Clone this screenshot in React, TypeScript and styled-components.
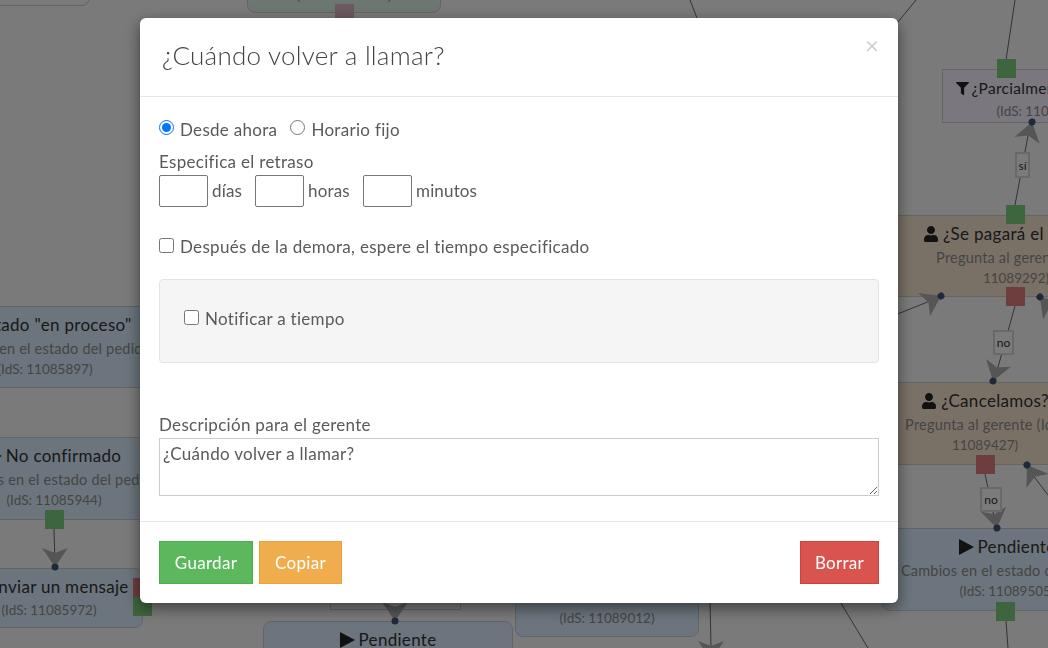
import React from "react";
import styled, { createGlobalStyle } from "styled-components";
import { FaUser, FaFilter } from "react-icons/fa";

const GlobalStyle = createGlobalStyle`
  html, body {
    margin: 0;
    height: 100%;
    overflow: hidden;
    font-family: Lato, "Open Sans", sans-serif;
    color: #5a5a5a;
  }
`;

const Canvas = styled.div`
  position: relative;
  width: 1048px;
  height: 648px;
  overflow: hidden;
  background-color: #f5f5f5;
`;

const Wires = styled.svg`
  position: absolute;
  inset: 0;
  z-index: 2;
`;

const nodeColors = {
  blue: "#d8ebfb",
  tan: "#f5e2cc",
  lilac: "#f4eefc",
  mint: "#d8efe4",
  plain: "#f5f5f5",
};

const Node = styled.div<{ $kind: keyof typeof nodeColors; $round?: boolean }>`
  position: absolute;
  box-sizing: border-box;
  display: flex;
  flex-direction: column;
  align-items: center;
  padding-top: 4px;
  border: 1px solid #c9c9c9;
  border-radius: ${(p) => (p.$round ? "8px" : "0")};
  background-color: ${(p) => nodeColors[p.$kind]};
  white-space: nowrap;
`;

const NodeTitle = styled.div<{ $small?: boolean }>`
  display: flex;
  align-items: center;
  gap: ${(p) => (p.$small ? "3px" : "4px")};
  height: 27px;
  font-size: ${(p) => (p.$small ? "15.5px" : "17px")};
  letter-spacing: 0.3px;
  color: #333;
`;

const NodeText = styled.div`
  height: 21px;
  line-height: 21px;
  font-size: 14.5px;
  letter-spacing: 0.2px;
  color: #8a8a8a;
`;

const NodeId = styled(NodeText)`
  font-size: 13.5px;
  letter-spacing: 0;
`;

const Port = styled.div<{ $color: "green" | "red" | "pink" }>`
  position: absolute;
  z-index: 3;
  width: 19px;
  height: 19px;
  background-color: ${(p) =>
    p.$color === "green" ? "#7ccc7c" : p.$color === "red" ? "#dc7c7c" : "#d9b0c0"};
`;

const EdgeLabel = styled.div`
  position: absolute;
  z-index: 4;
  box-sizing: border-box;
  display: flex;
  align-items: center;
  justify-content: center;
  border: 2px solid #d2d2d2;
  background-color: #f7f7f7;
  font-size: 12px;
  color: #333;
`;

const Overlay = styled.div`
  position: fixed;
  inset: 0;
  z-index: 10;
  display: flex;
  justify-content: center;
  align-items: flex-start;
  padding: 18px 10px 0 0;
  background-color: rgba(0, 0, 0, 0.5);
`;

const Modal = styled.div`
  position: relative;
  box-sizing: border-box;
  width: 758px;
  height: 585px;
  display: flex;
  flex-direction: column;
  background-color: #fff;
  border-radius: 6px;
  box-shadow: 0 5px 15px rgba(0, 0, 0, 0.5);
`;

const ModalHeader = styled.div`
  box-sizing: border-box;
  height: 79px;
  padding: 20px 22px 0;
  border-bottom: 1px solid #e5e5e5;
`;

const ModalTitle = styled.h4`
  margin: 0;
  font-size: 26px;
  line-height: 34px;
  font-weight: 300;
  letter-spacing: 0.25px;
  color: #444;
`;

const CloseButton = styled.button`
  position: absolute;
  top: 13px;
  right: 19px;
  padding: 0;
  border: 0;
  background: none;
  font-family: inherit;
  font-size: 24px;
  line-height: 28px;
  color: #cfcfcf;
`;

const ModalBody = styled.div`
  flex: 1;
  display: flex;
  flex-direction: column;
  padding: 21px 19px 0;
  font-size: 17px;
  letter-spacing: 0.3px;
`;

const RadioRow = styled.div`
  display: flex;
  gap: 13px;
  height: 24px;
`;

const Choice = styled.label`
  display: flex;
  align-items: center;
  gap: 6px;
  line-height: 24px;
`;

const RoundInput = styled.input.attrs({ type: "radio", name: "mode" })`
  width: 15px;
  height: 15px;
  margin: 0 0 6px;
`;

const CheckInput = styled.input.attrs({ type: "checkbox" })`
  width: 15px;
  height: 15px;
  margin: 0 0 4px;
`;

const FieldLabel = styled.div`
  margin-top: 8px;
  height: 25px;
  line-height: 24px;
`;

const DelayRow = styled.div`
  display: flex;
  align-items: center;
  height: 32px;
`;

const DelayInput = styled.input`
  box-sizing: border-box;
  width: 49px;
  height: 32px;
  margin: 0 4px 0 0;
  padding: 0 4px;
  border: 1px solid #777;
  border-radius: 2px;
  background: #fff;
`;

const Unit = styled.span<{ $width: number }>`
  width: ${(p) => p.$width}px;
  margin-bottom: 2px;
  letter-spacing: 0.15px;
`;

const DelayCheck = styled(Choice)`
  margin-top: 28px;
`;

const Well = styled.div`
  box-sizing: border-box;
  height: 84px;
  margin-top: 20px;
  padding: 27px 24px 0;
  border: 1px solid #e3e3e3;
  border-radius: 4px;
  background-color: #f5f5f5;
`;

const Description = styled.textarea`
  box-sizing: border-box;
  width: 720px;
  height: 58px;
  padding: 3px;
  border: 1px solid #ccc;
  font-family: inherit;
  font-size: 17px;
  letter-spacing: 0.3px;
  line-height: 24px;
  color: #5a5a5a;
`;

const DescriptionLabel = styled.div`
  margin-top: 50px;
  height: 25px;
  line-height: 24px;
`;

const ModalFooter = styled.div`
  box-sizing: border-box;
  height: 82px;
  display: flex;
  gap: 6px;
  padding: 19px 19px 0;
  border-top: 1px solid #e5e5e5;
`;

const buttonColors = {
  success: ["#5cb85c", "#4cae4c"],
  warning: ["#f0ad4e", "#eea236"],
  danger: ["#d9534f", "#d43f3a"],
};

const Button = styled.button<{ $tone: keyof typeof buttonColors; $width: number; $push?: boolean }>`
  width: ${(p) => p.$width}px;
  height: 43px;
  margin-left: ${(p) => (p.$push ? "auto" : "0")};
  border: 1px solid ${(p) => buttonColors[p.$tone][1]};
  background-color: ${(p) => buttonColors[p.$tone][0]};
  font-family: inherit;
  font-size: 17px;
  letter-spacing: 0.3px;
  color: #fff;
`;

const PlayIcon = () => (
  <svg width="15" height="16" viewBox="0 0 15 16">
    <polygon points="0,0 15,8 0,16" fill="#222" />
  </svg>
);

const Arrow = ({ x, y, angle }: { x: number; y: number; angle: number }) => (
  <g transform={`translate(${x} ${y}) rotate(${angle})`}>
    <polygon points="0,0 -13,-19 0,-14 13,-19" fill="#aaa" />
    <circle cx="0" cy="0" r="3.5" fill="#3d5570" />
  </g>
);

const wires = [
  "M690 0 L697 18",
  "M916 0 L898 22",
  "M1015 0 L1006 60",
  "M1015 205 L1030 125",
  "M1015 306 L995 378",
  "M985 474 L996 526",
  "M54 529 L55 565",
  "M870 325 L940 297",
  "M1026 466 L1048 495",
  "M1006 621 L1008 648",
  "M710 600 L711 648",
  "M839 600 L868 648",
];

const arrows = [
  { x: 1032, y: 122, angle: 195 },
  { x: 941, y: 296, angle: -117 },
  { x: 1040, y: 297, angle: 138 },
  { x: 993, y: 381, angle: 17 },
  { x: 997, y: 528, angle: -11 },
  { x: 1027, y: 465, angle: 147 },
  { x: 55, y: 567, angle: 0 },
  { x: 395, y: 621, angle: 0 },
  { x: 711, y: 660, angle: 0 },
];

const ports: { color: "green" | "red" | "pink"; left: number; top: number }[] = [
  { color: "pink", left: 335, top: 4 },
  { color: "green", left: 997, top: 59 },
  { color: "green", left: 1006, top: 205 },
  { color: "red", left: 1006, top: 287 },
  { color: "red", left: 976, top: 455 },
  { color: "green", left: 996, top: 602 },
  { color: "green", left: 45, top: 510 },
  { color: "red", left: 133, top: 578 },
  { color: "green", left: 133, top: 597 },
];

const App = () => {
  return (
    <>
      <GlobalStyle />
      <Canvas>
        <Node $kind="plain" $round style={{ left: -100, top: -40, width: 190, height: 46 }} />
        <Node $kind="mint" $round style={{ left: 247, top: -40, width: 194, height: 53, paddingTop: 24 }}>
          <NodeId>(IdS: 11085510)</NodeId>
        </Node>
        <Node $kind="lilac" style={{ left: 942, top: 69, width: 204, height: 54, paddingTop: 5 }}>
          <NodeTitle $small>
            <FaFilter size={13} color="#222" />
            ¿Parcialmente pagado?
          </NodeTitle>
          <NodeId>(IdS: 11089111)</NodeId>
        </Node>
        <Node $kind="tan" style={{ left: 880, top: 215, width: 272, height: 82 }}>
          <NodeTitle>
            <FaUser size={16} color="#222" />
            ¿Se pagará el pedido?
          </NodeTitle>
          <NodeText>Pregunta al gerente (IdS:</NodeText>
          <NodeId>11089292)</NodeId>
        </Node>
        <Node $kind="tan" style={{ left: 850, top: 382, width: 270, height: 83 }}>
          <NodeTitle>
            <FaUser size={16} color="#222" />
            ¿Cancelamos?
          </NodeTitle>
          <NodeText>Pregunta al gerente (IdS:</NodeText>
          <NodeId>11089427)</NodeId>
        </Node>
        <Node $kind="blue" $round style={{ left: 882, top: 528, width: 250, height: 83 }}>
          <NodeTitle>
            <PlayIcon />
            Pendiente
          </NodeTitle>
          <NodeText>Cambios en el estado del pedido</NodeText>
          <NodeId>(IdS: 11089505)</NodeId>
        </Node>
        <Node $kind="blue" style={{ left: -92, top: 306, width: 274, height: 82 }}>
          <NodeTitle>
            <PlayIcon />
            Estado "en proceso"
          </NodeTitle>
          <NodeText>Cambios en el estado del pedido</NodeText>
          <NodeId>(IdS: 11085897)</NodeId>
        </Node>
        <Node $kind="blue" style={{ left: -80, top: 437, width: 268, height: 83 }}>
          <NodeTitle>
            <PlayIcon />
            No confirmado
          </NodeTitle>
          <NodeText>Cambios en el estado del pedido</NodeText>
          <NodeId>(IdS: 11085944)</NodeId>
        </Node>
        <Node $kind="blue" $round style={{ left: -45, top: 568, width: 188, height: 60 }}>
          <NodeTitle>
            <PlayIcon />
            Enviar un mensaje
          </NodeTitle>
          <NodeId>(IdS: 11085972)</NodeId>
        </Node>
        <Node $kind="plain" style={{ left: 330, top: 560, width: 131, height: 50 }} />
        <Node $kind="blue" $round style={{ left: 263, top: 621, width: 250, height: 80 }}>
          <NodeTitle>
            <PlayIcon />
            Pendiente
          </NodeTitle>
        </Node>
        <Node $kind="blue" $round style={{ left: 515, top: 560, width: 184, height: 77, paddingTop: 47 }}>
          <NodeId>(IdS: 11089012)</NodeId>
        </Node>

        <Wires width="1048" height="648" viewBox="0 0 1048 648">
          {wires.map((d) => (
            <path key={d} d={d} stroke="#666" strokeWidth="1" fill="none" />
          ))}
          {arrows.map((a) => (
            <Arrow key={`${a.x}-${a.y}`} x={a.x} y={a.y} angle={a.angle} />
          ))}
        </Wires>

        {ports.map((p) => (
          <Port key={`${p.left}-${p.top}`} $color={p.color} style={{ left: p.left, top: p.top }} />
        ))}

        <EdgeLabel style={{ left: 1015, top: 152, width: 15, height: 26 }}>sí</EdgeLabel>
        <EdgeLabel style={{ left: 993, top: 330, width: 21, height: 25 }}>no</EdgeLabel>
        <EdgeLabel style={{ left: 980, top: 487, width: 22, height: 25 }}>no</EdgeLabel>

        <Overlay>
          <Modal>
            <ModalHeader>
              <ModalTitle>¿Cuándo volver a llamar?</ModalTitle>
            </ModalHeader>
            <CloseButton>×</CloseButton>
            <ModalBody>
              <RadioRow>
                <Choice>
                  <RoundInput defaultChecked />
                  Desde ahora
                </Choice>
                <Choice>
                  <RoundInput />
                  Horario fijo
                </Choice>
              </RadioRow>
              <FieldLabel>Especifica el retraso</FieldLabel>
              <DelayRow>
                <DelayInput />
                <Unit $width={43}>días</Unit>
                <DelayInput />
                <Unit $width={55}>horas</Unit>
                <DelayInput />
                <Unit $width={70}>minutos</Unit>
              </DelayRow>
              <DelayCheck>
                <CheckInput />
                Después de la demora, espere el tiempo especificado
              </DelayCheck>
              <Well>
                <Choice>
                  <CheckInput />
                  Notificar a tiempo
                </Choice>
              </Well>
              <DescriptionLabel>Descripción para el gerente</DescriptionLabel>
              <Description defaultValue="¿Cuándo volver a llamar?" />
            </ModalBody>
            <ModalFooter>
              <Button $tone="success" $width={94}>Guardar</Button>
              <Button $tone="warning" $width={83}>Copiar</Button>
              <Button $tone="danger" $width={79} $push>Borrar</Button>
            </ModalFooter>
          </Modal>
        </Overlay>
      </Canvas>
    </>
  );
};

export default App;
